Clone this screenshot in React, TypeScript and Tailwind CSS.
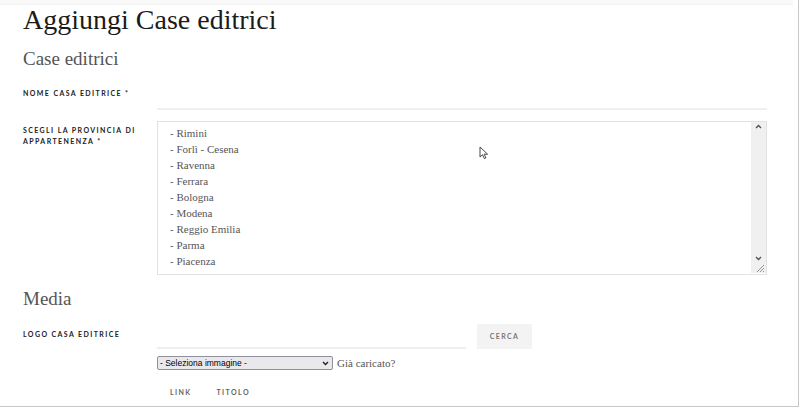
import React from "react";

const PROVINCE = [
  "- Rimini",
  "- Forlì - Cesena",
  "- Ravenna",
  "- Ferrara",
  "- Bologna",
  "- Modena",
  "- Reggio Emilia",
  "- Parma",
  "- Piacenza",
];

const serif = "font-['Liberation_Serif','DejaVu_Serif',serif]";
const label =
  "block font-['Lato','Open_Sans',sans-serif] text-[7px] leading-[11px] font-bold uppercase tracking-[0.2em] text-[#222]";
const tab =
  "block font-['Lato','Open_Sans',sans-serif] text-[7px] leading-[11px] font-bold uppercase tracking-[0.2em] text-[#666]";

export default function App() {
  return (
    <div className="w-[800px] h-[408px] overflow-hidden bg-white">
      <div className="w-[799px] h-[407px] border-r border-b border-[#c8c8c8] relative">
        {/* faint top band */}
        <div className="h-[5px] bg-[#f9f9f9] border-b border-[#f2f2f2] mr-[5px]" />

        <div className="pl-[23px] pr-[31px]">
          {/* Title */}
          <h1 className={`${serif} text-[28px] leading-[36px] text-[#1b1b1b] -mt-[3px]`}>
            Aggiungi Case editrici
          </h1>
          <h2 className={`${serif} text-[19px] leading-[24px] text-[#555] mt-[9px]`}>Case editrici</h2>

          {/* Nome casa editrice */}
          <div className="flex mt-[17px]">
            <div className="w-[134px] shrink-0">
              <span className={label}>Nome casa editrice *</span>
            </div>
            <div className="flex-1 h-[22px] border-b-2 border-[#efefef]" />
          </div>

          {/* Provincia */}
          <div className="flex mt-[11px]">
            <div className="w-[134px] shrink-0 pt-[4px]">
              <span className={label}>Scegli la provincia di appartenenza *</span>
            </div>
            <div className="flex-1 h-[154px] border border-[#e2e2e2] flex relative">
              <div className="flex-1 pl-[12px] pt-[3px]">
                {PROVINCE.map(p => (
                  <div key={p} className={`${serif} text-[11px] leading-[16px] text-[#555]`}>
                    {p}
                  </div>
                ))}
              </div>
              {/* scrollbar */}
              <div className="w-[15px] bg-[#f0f0f0] flex flex-col items-center justify-between pt-[2px] pb-[12px] mb-[1px]">
                <svg width="7" height="5" viewBox="0 0 7 5">
                  <path d="M1 4 L3.5 1.5 L6 4" fill="none" stroke="#505050" strokeWidth="1.3" />
                </svg>
                <svg width="7" height="5" viewBox="0 0 7 5">
                  <path d="M1 1 L3.5 3.5 L6 1" fill="none" stroke="#505050" strokeWidth="1.3" />
                </svg>
              </div>
              {/* resize grip */}
              <svg className="absolute right-[1px] bottom-[1px]" width="9" height="9" viewBox="0 0 9 9">
                <path d="M8 1 L1 8 M8 4 L4 8 M8 7 L7 8" stroke="#8a8a8a" strokeWidth="0.9" />
              </svg>
              {/* mouse cursor */}
              <svg className="absolute left-[321px] top-[24px]" width="10" height="14" viewBox="0 0 10 14">
                <path
                  d="M1 1 L1 11 L3.5 8.7 L5.3 12.6 L6.9 11.9 L5.2 8.2 L8.6 8.2 Z"
                  fill="#fff"
                  stroke="#333"
                  strokeWidth="0.9"
                  strokeLinejoin="round"
                />
              </svg>
            </div>
          </div>

          {/* Media */}
          <h2 className={`${serif} text-[19px] leading-[24px] text-[#555] mt-[12px]`}>Media</h2>

          <div className="flex mt-[13px]">
            <div className="w-[134px] shrink-0 pt-[5px]">
              <span className={label}>Logo casa editrice</span>
            </div>
            <div className="flex-1">
              <div className="flex items-start">
                <div className="w-[309px] h-[25px] border-b-2 border-[#efefef]" />
                <div className="ml-[11px] w-[55px] h-[25px] bg-[#f3f3f3] flex items-center justify-center">
                  <span className="font-['Lato','Open_Sans',sans-serif] text-[7px] font-bold uppercase tracking-[0.2em] text-[#777]">
                    Cerca
                  </span>
                </div>
              </div>
              <div className="flex items-center h-[14px] mt-[7px]">
                <div className="w-[176px] h-[14px] bg-[#e9e9ed] border border-[#8f8f9d] rounded-[2px] flex items-center justify-between pl-[2px] pr-[3px]">
                  <span className="font-['Liberation_Sans',Arial,sans-serif] text-[8.5px] leading-[12px] text-black">
                    - Seleziona immagine -
                  </span>
                  <svg width="7" height="5" viewBox="0 0 7 5">
                    <path d="M1 1 L3.5 3.5 L6 1" fill="none" stroke="#222" strokeWidth="1.4" />
                  </svg>
                </div>
                <span className={`${serif} text-[11px] leading-[14px] text-[#555] ml-[4px]`}>Già caricato?</span>
              </div>
              <div className="flex gap-[25px] pl-[13px] mt-[17px]">
                <span className={tab}>Link</span>
                <span className={tab}>Titolo</span>
              </div>
            </div>
          </div>
        </div>
      </div>
    </div>
  );
}
